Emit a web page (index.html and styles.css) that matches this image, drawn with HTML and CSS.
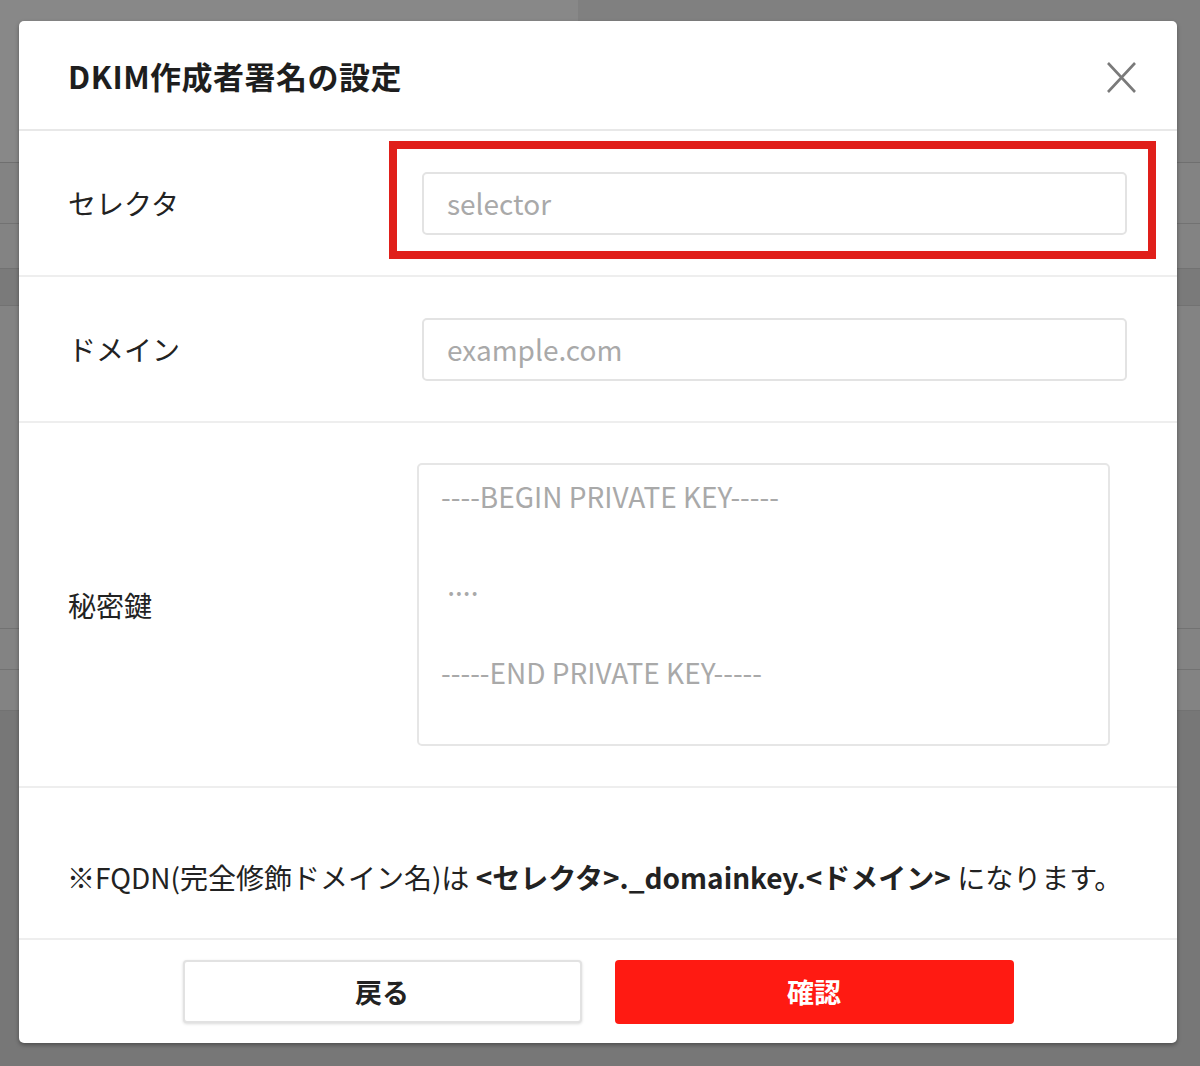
FILE: index.html
```html
<!DOCTYPE html>
<html lang="ja">
<head>
    <meta charset="UTF-8">
    <meta name="viewport" content="width=device-width, initial-scale=1.0">
    <title>DKIM作成者署名の設定</title>
    <link rel="stylesheet" href="styles.css">
</head>
<body>
    <!-- page behind the dialog, dimmed -->
    <div class="backdrop">
        <div class="topbar">
            <div class="topbar-left"></div>
            <div class="topbar-right"></div>
        </div>
        <div class="side-list">
            <div class="side-item"></div>
            <div class="side-item side-item-short"></div>
            <div class="side-item side-item-dark"></div>
            <div class="side-item side-item-tall"></div>
            <div class="side-item side-item-small"></div>
            <div class="side-item side-item-small"></div>
            <div class="side-item side-item-rest"></div>
        </div>
    </div>

    <div class="modal">
        <div class="modal-header">
            <h1 class="modal-title">DKIM作成者署名の設定</h1>
            <button class="close-btn" aria-label="閉じる">
                <svg width="32" height="32" viewBox="0 0 32 32">
                    <path d="M3 2 L30 31 M30 2 L3 31" stroke="#7a7a7a" stroke-width="2.6" fill="none"/>
                </svg>
            </button>
        </div>

        <div class="form-row">
            <label class="form-label" for="selector">セレクタ</label>
            <div class="form-field">
                <div class="input-wrap">
                    <input type="text" id="selector" class="text-input" placeholder="selector">
                    <div class="highlight-box"></div>
                </div>
            </div>
        </div>

        <div class="form-row">
            <label class="form-label" for="domain">ドメイン</label>
            <div class="form-field">
                <div class="input-wrap">
                    <input type="text" id="domain" class="text-input" placeholder="example.com">
                </div>
            </div>
        </div>

        <div class="form-row form-row-tall">
            <label class="form-label" for="private-key">秘密鍵</label>
            <div class="form-field">
                <textarea id="private-key" class="key-input" placeholder="----BEGIN PRIVATE KEY-----&#10;&#10; ....&#10;&#10;-----END PRIVATE KEY-----"></textarea>
            </div>
        </div>

        <div class="note">※FQDN(完全修飾ドメイン名)は <b>&lt;セレクタ&gt;._domainkey.&lt;ドメイン&gt;</b> になります。</div>

        <div class="modal-footer">
            <button class="btn btn-back">戻る</button>
            <button class="btn btn-confirm">確認</button>
        </div>
    </div>
</body>
</html>
```

FILE: styles.css
```css
* {
    box-sizing: border-box;
}
body {
    margin: 0;
    width: 1200px;
    height: 1066px;
    overflow: hidden;
    font-family: "Noto Sans CJK JP", "Noto Sans", sans-serif;
    background-color: #777777;
    color: #222222;
}

/* dimmed page behind */
.backdrop {
    display: flex;
    flex-direction: column;
    height: 100%;
}
.topbar {
    display: flex;
    height: 163px;
    border-bottom: 1px solid #6f6f6f;
}
.topbar-left {
    width: 578px;
    background-color: #888888;
}
.topbar-right {
    flex: 1;
    background-color: #808080;
}
.side-list {
    display: flex;
    flex-direction: column;
    flex: 1;
}
.side-item {
    height: 61px;
    background-color: #838383;
    border-bottom: 1px solid #727272;
}
.side-item-short {
    height: 45px;
}
.side-item-dark {
    height: 37px;
    background-color: #7a7a7a;
}
.side-item-tall {
    height: 323px;
}
.side-item-small {
    height: 41px;
}
.side-item-rest {
    flex: 1;
    background-color: #777777;
    border-bottom: none;
}

/* dialog */
.modal {
    position: absolute;
    top: 21px;
    left: 19px;
    width: 1158px;
    display: flex;
    flex-direction: column;
    background: white;
    border-radius: 5px;
    box-shadow: 0px 2px 4px rgba(0, 0, 0, 0.35);
}
.modal-header {
    display: flex;
    align-items: center;
    justify-content: space-between;
    height: 110px;
    padding: 0 40px 0 49px;
    border-bottom: 2px solid #e8e8e8;
}
.modal-title {
    margin: 0;
    font-size: 31px;
    font-weight: bold;
    color: #1e1e1e;
    letter-spacing: 0.5px;
}
.close-btn {
    border: none;
    background: none;
    padding: 0;
    width: 32px;
    height: 32px;
    cursor: pointer;
    margin-top: 4px;
}
.form-row {
    display: flex;
    align-items: center;
    height: 146px;
    padding: 0 0 0 49px;
    border-bottom: 2px solid #eeeeee;
}
.form-row-tall {
    height: 365px;
}
.form-label {
    width: 349px;
    font-size: 28px;
    color: #222222;
}
.form-field {
    flex: 1;
}
.input-wrap {
    position: relative;
    width: 705px;
    margin-left: 5px;
}
.text-input {
    display: block;
    width: 100%;
    height: 63px;
    padding: 0 23px;
    border: 2px solid #e3e3e3;
    border-radius: 5px;
    font-family: inherit;
    font-size: 28px;
    color: #222222;
    outline: none;
}
.text-input::placeholder {
    color: #a9a9a9;
}
.highlight-box {
    position: absolute;
    top: -31px;
    left: -33px;
    right: -29px;
    bottom: -24px;
    border: 8px solid #e01f1a;
    pointer-events: none;
}
.key-input {
    display: block;
    width: 693px;
    height: 283px;
    padding: 9px 22px;
    border: 2px solid #e6e6e6;
    border-radius: 5px;
    font-family: inherit;
    font-size: 28px;
    line-height: 44px;
    resize: none;
    outline: none;
}
.key-input::placeholder {
    color: #a9a9a9;
}
.note {
    height: 152px;
    padding: 71px 0 0 48px;
    font-size: 28px;
    line-height: 36px;
    color: #222222;
    border-bottom: 2px solid #eeeeee;
}
.note b {
    font-weight: bold;
}
.modal-footer {
    display: flex;
    justify-content: center;
    align-items: center;
    gap: 33px;
    height: 103px;
}
.btn {
    width: 399px;
    height: 63px;
    font-family: inherit;
    font-size: 27px;
    font-weight: bold;
    border-radius: 4px;
    cursor: pointer;
}
.btn-back {
    background: white;
    color: #222222;
    border: 2px solid #e2e2e2;
    box-shadow: 0px 1px 3px rgba(0, 0, 0, 0.15);
}
.btn-confirm {
    height: 64px;
    background-color: #ff1a12;
    color: white;
    border: none;
}
```
